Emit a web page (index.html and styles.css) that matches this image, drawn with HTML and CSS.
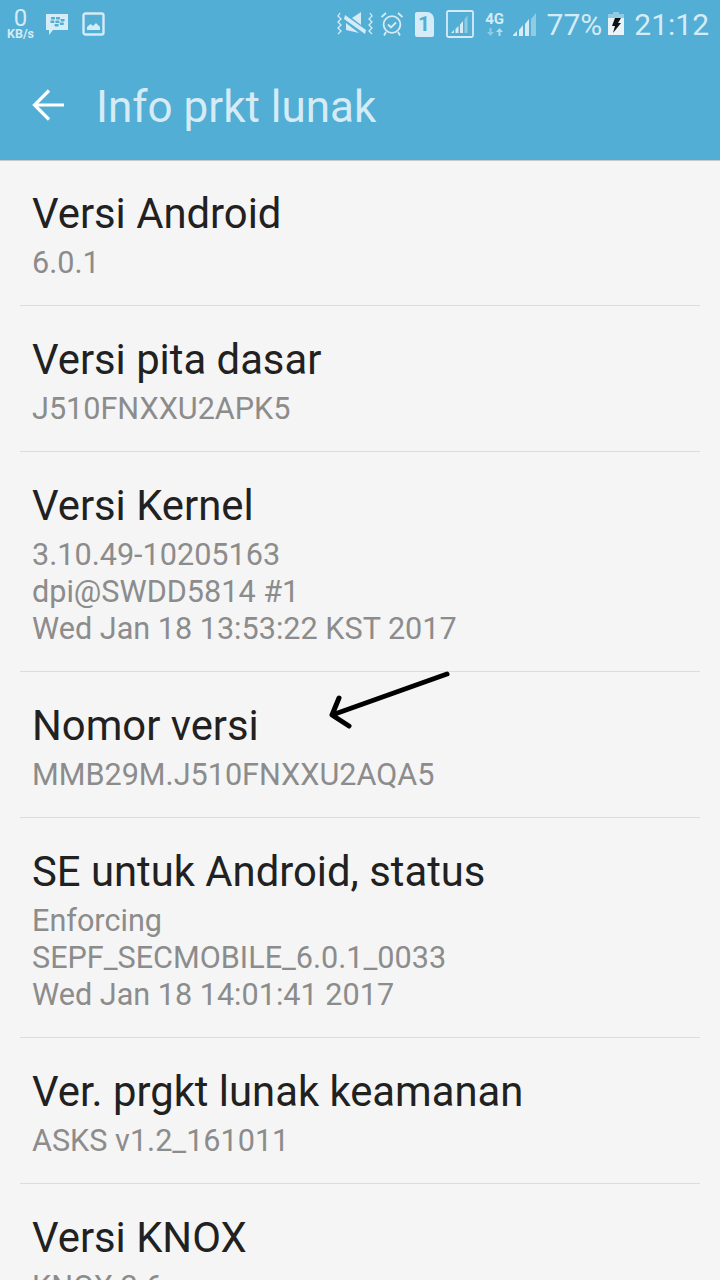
FILE: index.html
```html
<!DOCTYPE html>
<html lang="en">
<head>
  <meta charset="UTF-8">
  <meta name="viewport" content="width=device-width, initial-scale=1.0">
  <title>Info prkt lunak</title>
  <link rel="stylesheet" href="styles.css">
</head>
<body>
  <header class="app-header">
    <div class="status-bar">
      <div class="status-left">
        <div class="net-speed"><span class="net-value">0</span><span class="net-unit">KB/s</span></div>
        <svg class="ic-bbm" viewBox="0 0 24 24" width="24" height="24">
          <path d="M1 1h22v16H8l-4 5v-5H1z" fill="#d5ebf5"/>
          <g fill="#52aed5">
            <rect x="6" y="4" width="4" height="2.400" rx=".6"/><rect x="11" y="4" width="4" height="2.400" rx=".6"/>
            <rect x="5.400" y="7.500" width="4" height="2.400" rx=".6"/><rect x="10.400" y="7.500" width="4" height="2.400" rx=".6"/><rect x="15.600" y="6" width="4" height="2.400" rx=".6"/>
            <rect x="9.600" y="11" width="4" height="2.400" rx=".6"/><rect x="14.800" y="9.500" width="4" height="2.400" rx=".6"/>
          </g>
        </svg>
        <svg class="ic-gallery" viewBox="0 0 24 24" width="24" height="24">
          <rect x="1.500" y="1.500" width="20" height="21" rx="2" fill="none" stroke="#d5ebf5" stroke-width="2.400"/>
          <path d="M5 18v-3l3.500-3 2.500 2 3-3 4 4v3z" fill="#d5ebf5"/>
        </svg>
      </div>
      <div class="status-right">
        <svg class="ic-mute" viewBox="0 0 36 24" width="36" height="24">
          <path d="M15 6l9-6v13z" fill="#d5ebf5"/>
          <path d="M8 3l21 15-1 4L7 7z" fill="#d5ebf5"/>
          <path d="M9 11l13 10-13-3z" fill="#d5ebf5"/>
          <path d="M3 1L1 4l3 3-3 3 3 3-3 3 3 3-3 3M33 1l2 3-3 3 3 3-3 3 3 3-3 3 3 3" fill="none" stroke="#d5ebf5" stroke-width="1.300"/>
        </svg>
        <svg class="ic-alarm" viewBox="0 0 22 24" width="22" height="24">
          <circle cx="11" cy="12.500" r="8.400" fill="none" stroke="#d5ebf5" stroke-width="1.800"/>
          <path d="M7 12.500l3 3 5-5" fill="none" stroke="#d5ebf5" stroke-width="1.800"/>
          <path d="M.5 5L5 1M21.500 5L17 1M5 20l-2 3.500M17 20l2 3.500" fill="none" stroke="#d5ebf5" stroke-width="1.800"/>
        </svg>
        <div class="sim-card">1</div>
        <svg class="ic-sim-signal" viewBox="0 0 28 28" width="28" height="28">
          <rect x="1" y="1" width="26" height="26" rx="1.500" fill="none" stroke="#d5ebf5" stroke-width="1.800"/>
          <path d="M5 23h3v-3zM9.500 23h3v-7l-3 3zM14 23h3V11l-3 3.500z" fill="#d5ebf5"/>
          <path d="M18.500 23h3V5l-3 4.500z" fill="#8fcbe3"/>
        </svg>
        <div class="net-type">
          <span class="net-label">4G</span>
          <svg class="net-arrows" viewBox="0 0 18 8" width="18" height="8">
            <path d="M5.500 8V4h2.500L4.500 0 1 4h2.500v4z" transform="rotate(180 4.500 4)" fill="#8fcbe3"/>
            <path d="M14.500 8V4H17l-3.500-4L10 4h2.500v4z" fill="#b4dcec"/>
          </svg>
        </div>
        <svg class="ic-signal" viewBox="0 0 24 23" width="24" height="23">
          <path d="M0 23h4v-5l-4 4zM6 23h4V12l-4 5zM12 23h4V6l-4 5z" fill="#d5ebf5"/>
          <path d="M18 23h5V0l-5 6z" fill="#8fcbe3"/>
        </svg>
        <span class="battery-pct">77%</span>
        <svg class="ic-battery" viewBox="0 0 16 24" width="16" height="24">
          <path d="M5 0h6v2H5z" fill="#8fcbe3"/>
          <path d="M0 2h16v5H0z" fill="#8fcbe3"/>
          <path d="M0 6h16v17H0z" fill="#e8f4f9"/>
          <path d="M7 6h6l-3 5h3L5 21l2-7H4z" fill="#111"/>
        </svg>
        <span class="clock">21:12</span>
      </div>
    </div>
    <div class="toolbar">
      <svg class="back-icon" viewBox="0 0 34 34" width="34" height="34">
        <path d="M33 17H4M18 2.500L3.500 17 18 31.500" fill="none" stroke="#fff" stroke-width="3.200"/>
      </svg>
      <h1 class="toolbar-title">Info prkt lunak</h1>
    </div>
  </header>

  <main class="info-list">
    <div class="info-item">
      <div class="info-title">Versi Android</div>
      <div class="info-sub">6.0.1</div>
    </div>
    <div class="info-item">
      <div class="info-title">Versi pita dasar</div>
      <div class="info-sub">J510FNXXU2APK5</div>
    </div>
    <div class="info-item">
      <div class="info-title">Versi Kernel</div>
      <div class="info-sub">3.10.49-10205163<br>dpi@SWDD5814 #1<br>Wed Jan 18 13:53:22 KST 2017</div>
    </div>
    <div class="info-item">
      <div class="info-title">Nomor versi</div>
      <div class="info-sub">MMB29M.J510FNXXU2AQA5</div>
      <svg class="hand-arrow" viewBox="0 0 150 70" width="150" height="70">
        <path d="M137 11L22 52M29 35L22 52L39 63" fill="none" stroke="#000" stroke-width="5" stroke-linecap="round" stroke-linejoin="round"/>
      </svg>
    </div>
    <div class="info-item">
      <div class="info-title">SE untuk Android, status</div>
      <div class="info-sub">Enforcing<br>SEPF_SECMOBILE_6.0.1_0033<br>Wed Jan 18 14:01:41 2017</div>
    </div>
    <div class="info-item">
      <div class="info-title">Ver. prgkt lunak keamanan</div>
      <div class="info-sub">ASKS v1.2_161011</div>
    </div>
    <div class="info-item">
      <div class="info-title">Versi KNOX</div>
      <div class="info-sub">KNOX 2.6</div>
    </div>
  </main>
</body>
</html>
```

FILE: styles.css
```css
/* page */
html, body {
  margin: 0;
  padding: 0;
  height: 1280px;
  overflow: hidden;
}

body {
  font-family: Roboto, "Noto Sans", sans-serif;
  background-color: #f5f5f5;
}

/* top blue area */
.app-header {
  height: 160px;
  background-color: #52aed5;
  box-shadow: 0 1px 0 #c9c9c9;
}

.status-bar {
  height: 50px;
  display: flex;
  justify-content: space-between;
  align-items: flex-start;
  color: #d5ebf5;
}

.status-left {
  display: flex;
  align-items: flex-start;
  padding: 9px 0 0 7px;
}

.net-speed {
  display: flex;
  flex-direction: column;
  align-items: center;
  width: 27px;
}

.net-value {
  font-size: 24px;
  line-height: 19px;
}

.net-unit {
  font-size: 12.500px;
  font-weight: 700;
  line-height: 11px;
}

.ic-bbm {
  margin: 4px 0 0 11px;
}

.ic-gallery {
  margin: 3px 0 0 13px;
}

.status-right {
  display: flex;
  align-items: flex-start;
  padding: 9px 11px 0 0;
}

.ic-mute {
  margin-top: 3px;
}

.ic-alarm {
  margin: 3px 0 0 8px;
}

.sim-card {
  width: 19px;
  height: 25px;
  margin: 3px 0 0 12px;
  background-color: #d5ebf5;
  border-radius: 2px 7px 2px 2px;
  color: #52aed5;
  font-size: 21px;
  font-weight: 700;
  line-height: 25px;
  text-align: center;
}

.ic-sim-signal {
  margin: 1px 0 0 12px;
}

.net-type {
  display: flex;
  flex-direction: column;
  align-items: center;
  width: 20px;
  margin: 3px 0 0 11px;
}

.net-label {
  font-size: 15px;
  font-weight: 700;
  line-height: 14px;
}

.net-arrows {
  margin-top: 2px;
}

.ic-signal {
  margin: 4px 0 0 8px;
}

.battery-pct {
  font-size: 30px;
  line-height: 32px;
  margin-left: 10px;
}

.ic-battery {
  margin: 3px 0 0 6px;
}

.clock {
  font-size: 30px;
  line-height: 32px;
  margin-left: 10px;
}

/* toolbar */
.toolbar {
  height: 110px;
  display: flex;
  align-items: center;
  padding-left: 31px;
  box-sizing: border-box;
}

.toolbar-title {
  margin: 3px 0 0 31px;
  font-size: 44px;
  font-weight: 400;
  color: #d5ebf5;
}

/* list */
.info-item {
  position: relative;
  margin: 0 20px;
  padding: 30px 12px 24px;
  border-bottom: 1px solid #dcdcdc;
}

.info-title {
  font-size: 41.800px;
  line-height: 48px;
  color: #212121;
}

.info-sub {
  font-size: 30.600px;
  line-height: 37px;
  color: #8c8c8c;
  margin-top: 6px;
}

/* hand drawn arrow on top of the screenshot */
.hand-arrow {
  position: absolute;
  top: -9px;
  left: 290px;
}
```
